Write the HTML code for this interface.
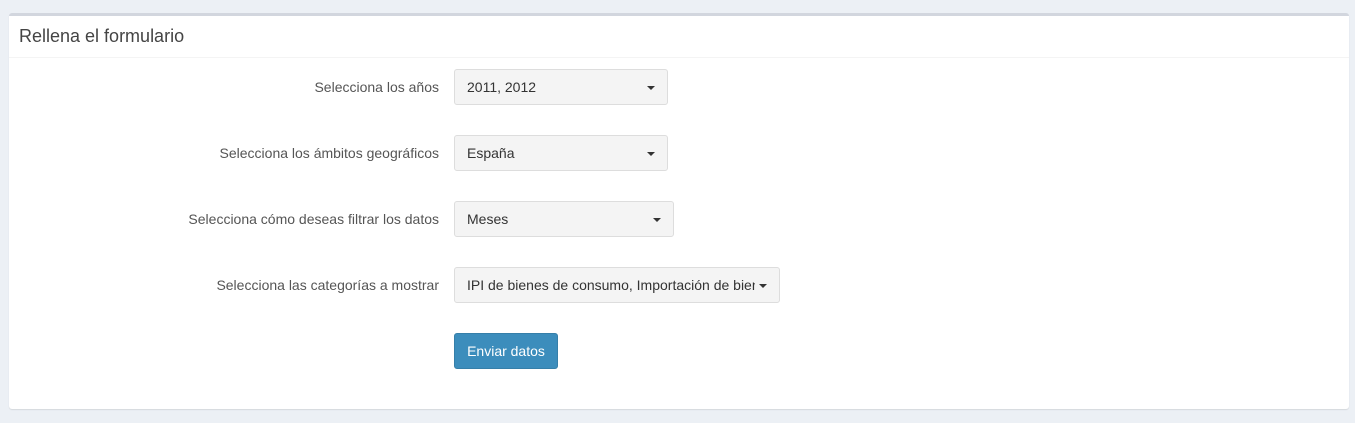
<!DOCTYPE html><html><head><style>
body{margin:0;background:#ecf0f5;font-family:"Liberation Sans",sans-serif;width:1355px;height:423px;overflow:hidden}
.box{position:absolute;left:9px;top:13px;width:1340px;height:393px;background:#fff;border-top:3px solid #d2d6de;border-radius:3px;box-shadow:0 1px 1px rgba(0,0,0,.1)}
.hd{height:41px;border-bottom:1px solid #f4f4f4;font-size:18px;color:#444;padding-left:10px;line-height:40px}
.lab{position:absolute;right:910px;font-size:14px;color:#555;text-align:right;white-space:nowrap}
.sel{position:absolute;left:445px;height:34px;background:#f4f4f4;border:1px solid #ddd;border-radius:3px;font-size:14px;color:#333;line-height:34px;padding-left:12px;box-sizing:border-box;height:36px;white-space:nowrap;overflow:hidden}
.car{position:absolute;top:16px;width:0;height:0;border-left:4px solid transparent;border-right:4px solid transparent;border-top:4px solid #333}
.btn{position:absolute;left:445px;top:317px;width:104px;height:36px;background:#3c8dbc;border:1px solid #367fa9;box-sizing:border-box;border-radius:3px;color:#fff;font-size:14px;line-height:34px;text-align:center}
</style></head><body><div class="box">
<div class="hd">Rellena el formulario</div>
<div class="lab" style="top:63px">Selecciona los años</div>
<div class="sel" style="top:53px;width:214px">2011, 2012<span class="car" style="left:192px"></span></div>
<div class="lab" style="top:129px">Selecciona los ámbitos geográficos</div>
<div class="sel" style="top:119px;width:214px">España<span class="car" style="left:192px"></span></div>
<div class="lab" style="top:195px">Selecciona cómo deseas filtrar los datos</div>
<div class="sel" style="top:185px;width:220px">Meses<span class="car" style="left:198px"></span></div>
<div class="lab" style="top:261px">Selecciona las categorías a mostrar</div>
<div class="sel" style="top:251px;width:326px"><span style="display:inline-block;width:288px;overflow:hidden;vertical-align:top">IPI de bienes de consumo, Importación de bienes</span><span class="car" style="left:304px"></span></div>
<div class="btn">Enviar datos</div>
</div></body></html>
